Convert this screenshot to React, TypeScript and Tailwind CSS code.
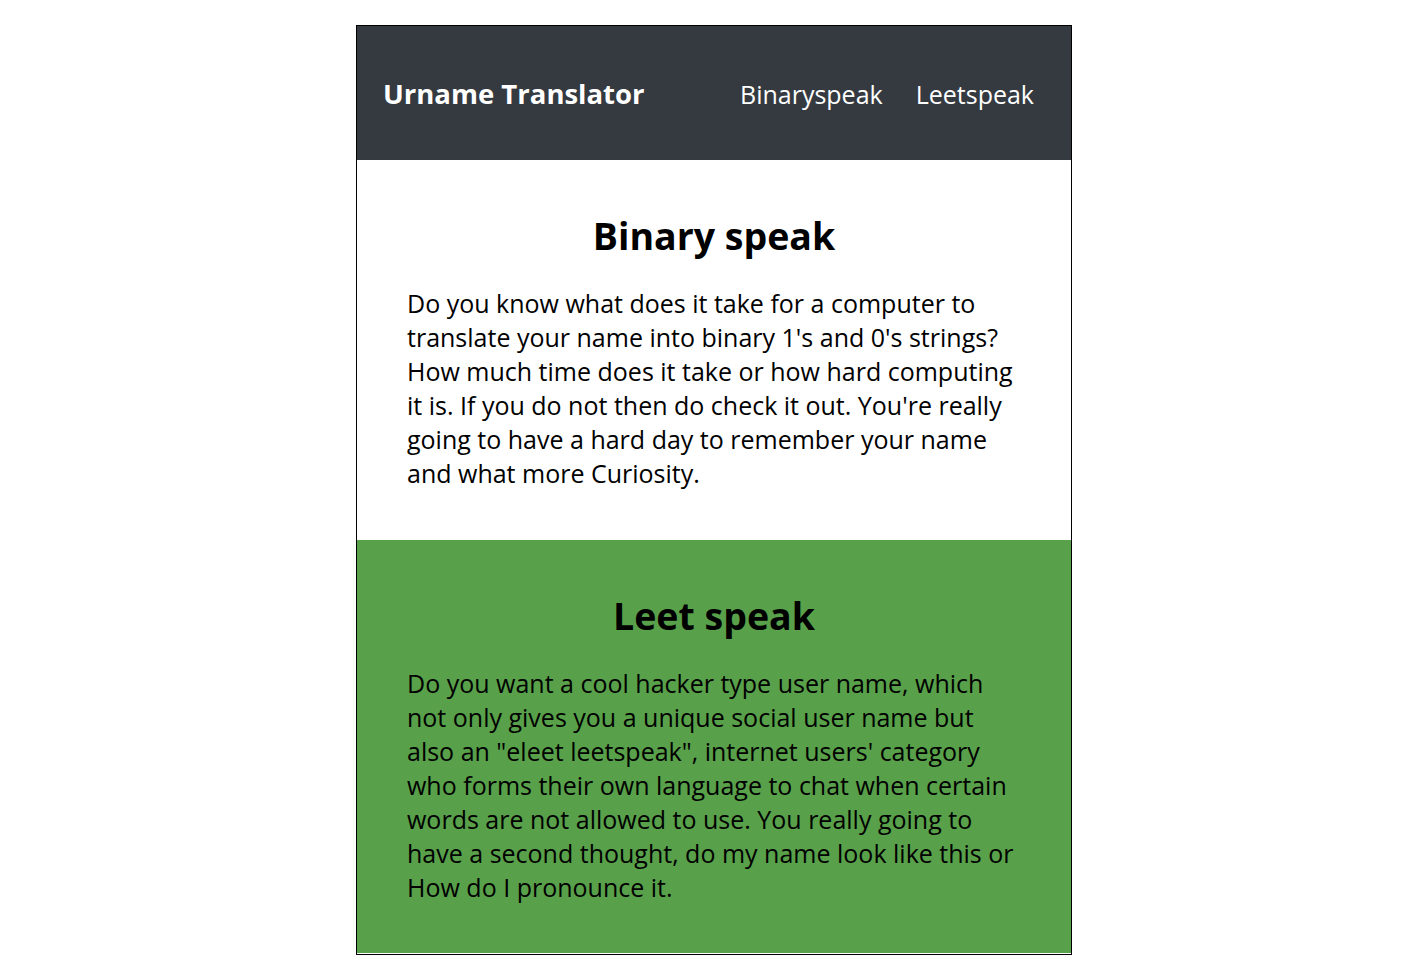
export default function App() {
  return (
    <div className="min-h-screen bg-white pt-[25px]" style={{ fontFamily: '"Open Sans", sans-serif' }}>
      <div className="ml-[356px] w-[716px] border border-black bg-white pb-px">
        <header className="flex h-[134px] items-center justify-between bg-[#343a40] pl-[26px] pr-[37px] text-white">
          <div className="mt-[2px] text-[27.5px] font-bold">Urname Translator</div>
          <nav className="mt-[4px] flex gap-[33px] text-[25px]">
            <a>Binaryspeak</a>
            <a>Leetspeak</a>
          </nav>
        </header>
        <section className="bg-white px-[50px] pb-[50px] pt-[53px] text-black">
          <h2 className="text-center text-[37.5px] font-bold leading-[46px]">Binary speak</h2>
          <p className="mt-[27px] text-[25px] leading-[34px]">
            Do you know what does it take for a computer to translate your name into binary 1's and 0's strings? How much time does it take or how hard computing it is. If you do not then do check it out. You're really going to have a hard day to remember your name and what more Curiosity.
          </p>
        </section>
        <section className="bg-[#58a14a] px-[50px] pb-[49px] pt-[53px] text-black">
          <h2 className="text-center text-[37.5px] font-bold leading-[46px]">Leet speak</h2>
          <p className="mt-[27px] text-[25px] leading-[34px]">
            Do you want a cool hacker type user name, which not only gives you a unique social user name but also an "eleet leetspeak", internet users' category who forms their own language to chat when certain words are not allowed to use. You really going to have a second thought, do my name look like this or How do I pronounce it.
          </p>
        </section>
      </div>
    </div>
  );
}
